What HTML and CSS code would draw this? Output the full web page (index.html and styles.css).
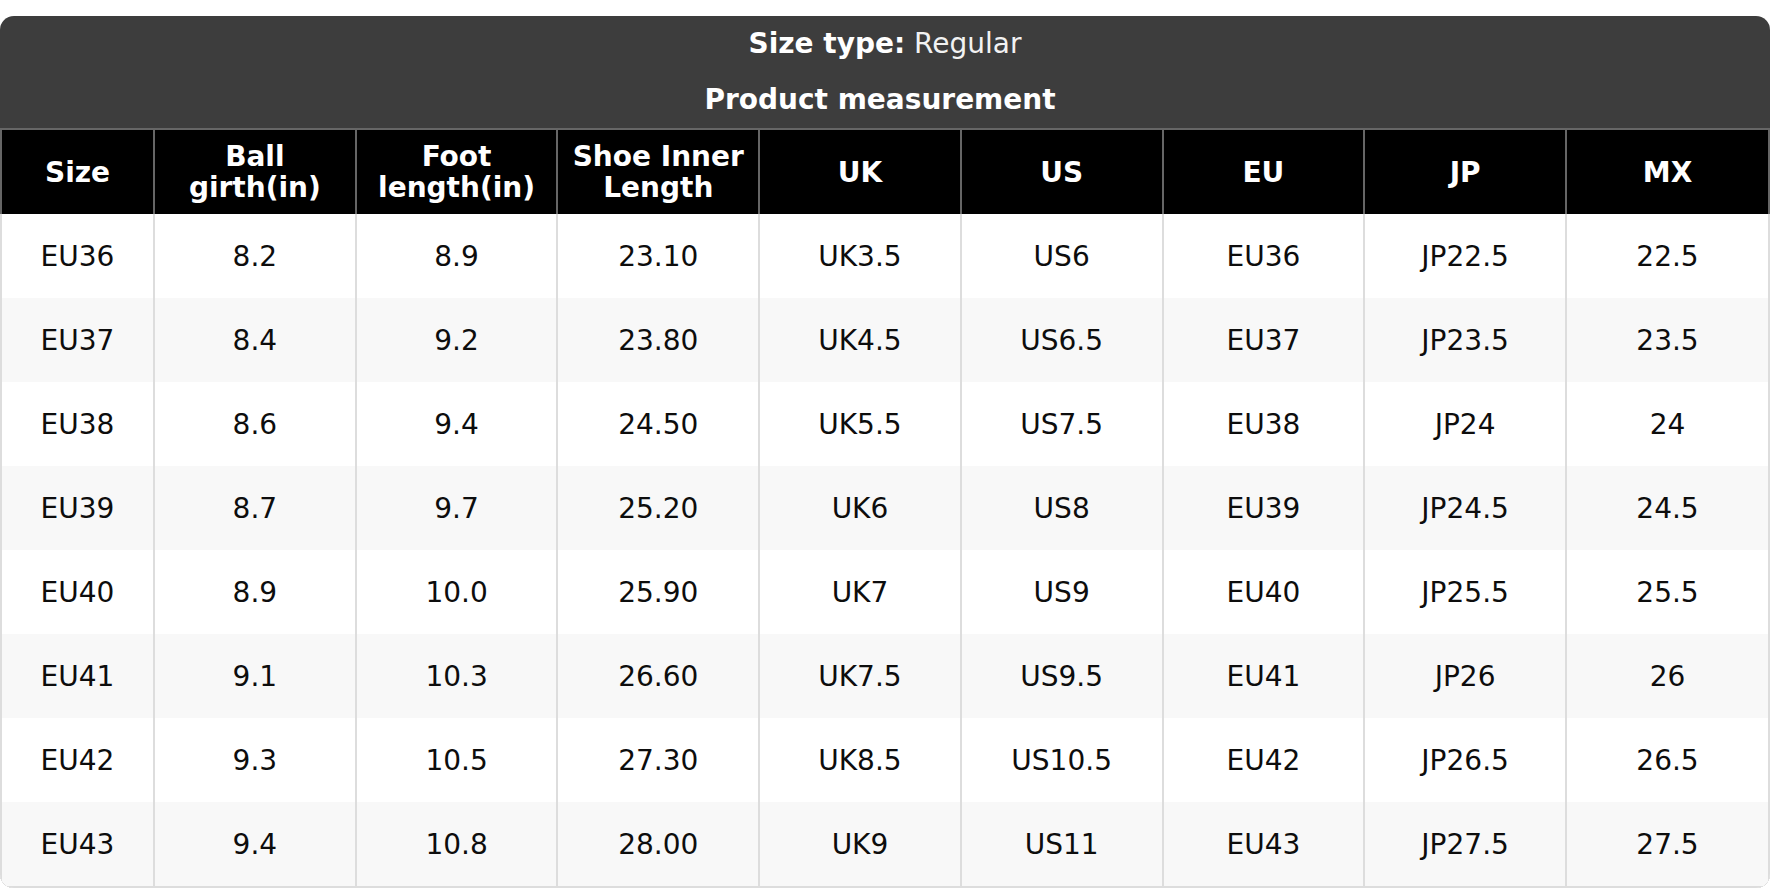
FILE: index.html
```html
<!DOCTYPE html>
<html>
<head>
<meta charset="utf-8">
<link rel="stylesheet" href="styles.css">
</head>
<body>
<div class="chart">
  <div class="caption-line"><b>Size type:</b> <span class="regular">Regular</span></div>
  <div class="caption-line caption-sub"><b>Product measurement</b></div>
  <table class="size-table">
    <colgroup>
      <col class="col-first">
      <col><col><col><col><col><col><col>
      <col class="col-last">
    </colgroup>
    <thead>
      <tr>
        <th>Size</th>
        <th>Ball<br>girth(in)</th>
        <th>Foot<br>length(in)</th>
        <th>Shoe Inner<br>Length</th>
        <th>UK</th>
        <th>US</th>
        <th>EU</th>
        <th>JP</th>
        <th>MX</th>
      </tr>
    </thead>
    <tbody>
      <tr><td>EU36</td><td>8.2</td><td>8.9</td><td>23.10</td><td>UK3.5</td><td>US6</td><td>EU36</td><td>JP22.5</td><td>22.5</td></tr>
      <tr><td>EU37</td><td>8.4</td><td>9.2</td><td>23.80</td><td>UK4.5</td><td>US6.5</td><td>EU37</td><td>JP23.5</td><td>23.5</td></tr>
      <tr><td>EU38</td><td>8.6</td><td>9.4</td><td>24.50</td><td>UK5.5</td><td>US7.5</td><td>EU38</td><td>JP24</td><td>24</td></tr>
      <tr><td>EU39</td><td>8.7</td><td>9.7</td><td>25.20</td><td>UK6</td><td>US8</td><td>EU39</td><td>JP24.5</td><td>24.5</td></tr>
      <tr><td>EU40</td><td>8.9</td><td>10.0</td><td>25.90</td><td>UK7</td><td>US9</td><td>EU40</td><td>JP25.5</td><td>25.5</td></tr>
      <tr><td>EU41</td><td>9.1</td><td>10.3</td><td>26.60</td><td>UK7.5</td><td>US9.5</td><td>EU41</td><td>JP26</td><td>26</td></tr>
      <tr><td>EU42</td><td>9.3</td><td>10.5</td><td>27.30</td><td>UK8.5</td><td>US10.5</td><td>EU42</td><td>JP26.5</td><td>26.5</td></tr>
      <tr><td>EU43</td><td>9.4</td><td>10.8</td><td>28.00</td><td>UK9</td><td>US11</td><td>EU43</td><td>JP27.5</td><td>27.5</td></tr>
    </tbody>
  </table>
</div>
</body>
</html>
```
FILE: styles.css
```css
html, body {
  margin: 0;
  padding: 0;
  background: #ffffff;
}

body {
  font-family: "DejaVu Sans", "Liberation Sans", sans-serif;
  font-size: 28px;
  color: #0d0d0d;
}

.chart {
  margin-top: 16px;
  width: 1770px;
  border-radius: 14px;
  overflow: hidden;
  background: #3d3d3d;
}

.caption-line {
  height: 32px;
  line-height: 32px;
  padding: 12px 0;
  text-align: center;
  color: #ffffff;
}

.caption-sub {
  padding-right: 10px;
}

.caption-line b {
  font-weight: bold;
}

.caption-line .regular {
  color: #f2f2f2;
}

.size-table {
  width: 100%;
  border-collapse: separate;
  border-spacing: 0;
  table-layout: fixed;
  background: #ffffff;
}

.col-first {
  width: 155px;
}

.col-last {
  width: 203px;
}

.size-table th {
  background: #000000;
  color: #ffffff;
  font-weight: bold;
  line-height: 31px;
  padding: 0 4px;
  border-top: 2px solid #666666;
  border-right: 2px solid #666666;
  text-align: center;
  vertical-align: middle;
}

.size-table thead tr {
  height: 86px;
}

.size-table th:first-child {
  border-left: 2px solid #666666;
}

.size-table tbody tr {
  height: 84px;
}

.size-table tbody tr:nth-child(even) td {
  background: #f8f8f8;
}

.size-table td {
  text-align: center;
  vertical-align: middle;
  padding: 0 4px;
  line-height: 31px;
  border-right: 2px solid #dddddd;
}

.size-table td:first-child {
  border-left: 2px solid #dddddd;
}

.size-table tbody tr:last-child {
  height: 86px;
}

.size-table tbody tr:last-child td {
  border-bottom: 2px solid #dddddd;
}
```
